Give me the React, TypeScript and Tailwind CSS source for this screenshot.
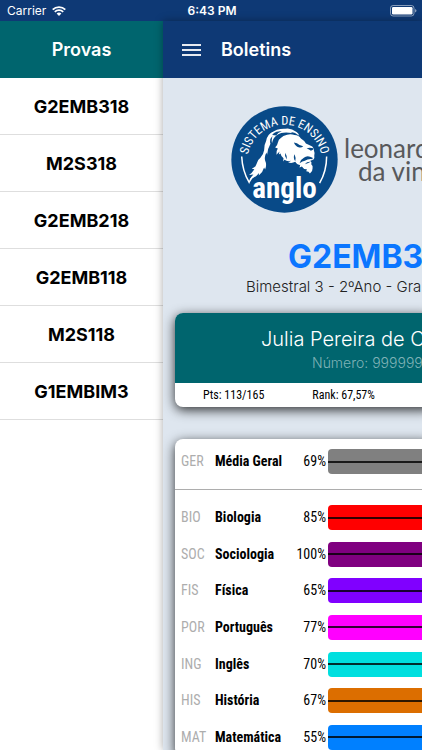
const exams = ["G2EMB318", "M2S318", "G2EMB218", "G2EMB118", "M2S118", "G1EMBIM3"];

const subjects = [
  { code: "BIO", name: "Biologia", score: "85%", color: "bg-[#ff0000]" },
  { code: "SOC", name: "Sociologia", score: "100%", color: "bg-[#800080]" },
  { code: "FIS", name: "Física", score: "65%", color: "bg-[#8000ff]" },
  { code: "POR", name: "Português", score: "77%", color: "bg-[#ff00ff]" },
  { code: "ING", name: "Inglês", score: "70%", color: "bg-[#00dfdf]" },
  { code: "HIS", name: "História", score: "67%", color: "bg-[#dc6e00]" },
  { code: "MAT", name: "Matemática", score: "55%", color: "bg-[#0080ff]" },
];

function WifiIcon() {
  return (
    <svg viewBox="0 0 14 10" className="h-[10px] w-[14px]" fill="none" stroke="white" strokeWidth="1.8">
      <path d="M0.7 3.6 A9 9 0 0 1 13.3 3.6" />
      <path d="M2.8 5.8 A6 6 0 0 1 11.2 5.8" />
      <path d="M4.6 7.6 A3.4 3.4 0 0 1 9.4 7.6 L7 10 Z" fill="white" stroke="none" />
    </svg>
  );
}

function BatteryIcon() {
  return (
    <svg viewBox="0 0 27 12" className="h-3 w-[27px]">
      <rect x="0.5" y="0.5" width="23.5" height="10.5" rx="2.6" fill="none" stroke="white" strokeOpacity="0.5" />
      <rect x="2" y="2" width="20.5" height="7.5" rx="1.2" fill="white" />
      <path d="M25 4 Q26.5 4.6 26.5 5.8 Q26.5 7 25 7.6 Z" fill="white" fillOpacity="0.5" />
    </svg>
  );
}

function AngloLogo() {
  return (
    <svg viewBox="28 32 320 320" className="size-[107px] shrink-0" role="img" aria-label="Sistema de Ensino Anglo">
      <circle cx="188" cy="192" r="159" fill="#084a88" />
      <path id="seal-arc" d="M76 200 A112 112 0 1 1 300 200" fill="none" />
      <text className="font-['Roboto_Condensed',sans-serif]" fontSize="37" fill="white" textAnchor="middle">
        <textPath href="#seal-arc" startOffset="50%">
          SISTEMA DE ENSINO
        </textPath>
      </text>
      <g fill="none" stroke="white" strokeWidth="4.5">
        <path d="M60 183 Q62 226 82 260 Q90 242 108 230" />
        <path d="M314 183 Q314 226 293 263" />
      </g>
      <g fill="white">
        {/* mane */}
        <path d="M154 109 Q136 116 133 137 Q127 148 127 164 Q125 177 116 187 Q107 193 104 206 Q101 216 90 220 L98 221 Q91 232 82 238 L95 237 Q89 246 83 252 Q101 246 112 232 L111 240 Q124 229 127 216 L130 222 Q136 208 130 195 Q127 183 134 171 L136 178 Q138 158 146 145 Q142 132 152 122 Q148 136 151 143 Q153 128 164 120 L151 119 Q158 112 154 109 Z" />
        <path d="M148 113 Q165 99 190 100 Q207 96 224 110 Q230 114 232 121 Q220 111 206 109 L212 113 Q190 109 178 113 Q169 116 162 122 Q167 112 180 107 Q164 107 148 117 Z" />
        {/* head */}
        <path d="M177 128 Q183 120 196 118 Q207 115 218 119 Q231 120 237 129 Q246 134 252 144 Q262 149 271 153 Q276 157 276 165 Q279 171 277 180 Q279 188 274 193 L265 196 Q271 201 268 206 Q275 212 272 218 Q273 226 264 234 Q261 227 253 227 L255 221 Q245 222 240 213 L233 216 L235 208 Q225 209 220 199 Q211 204 199 201 L208 196 Q196 199 188 193 L184 198 L185 188 Q178 184 176 174 L171 177 L173 168 L164 178 Q163 165 168 159 L160 156 Q168 147 168 142 Q170 132 177 128 Z" />
      </g>
      <g fill="#084a88">
        {/* brow, nose and mouth */}
        <path d="M216 141 Q226 141 233 149 L244 152 Q238 158 230 155 Q222 154 216 141 Z" />
        <path d="M254 158 Q264 155 275 158 Q275 163 267 166 Q262 161 254 158 Z" />
        <path d="M272 187 Q256 178 246 187 Q236 192 233 203 Q242 197 249 196 Q258 189 272 191 Z" />
        <path d="M249 206 Q255 198 266 199 Q261 203 249 206 Z" />
        <path d="M218 176 Q213 186 220 197 Q223 186 218 176 Z" />
        <path d="M190 172 Q187 182 195 192 Q196 181 190 172 Z" />
      </g>
      <text
        x="188"
        y="307"
        className="font-['Roboto_Condensed',sans-serif] font-bold"
        fontSize="87"
        fill="white"
        textAnchor="middle"
      >
        anglo
      </text>
    </svg>
  );
}

function Bar({ color }: { color: string }) {
  return (
    <div className={`flex h-[25px] items-center rounded-l ${color}`}>
      <div className="h-[2px] w-full bg-black/80" />
    </div>
  );
}

function StatusBar() {
  return (
    <div className="grid h-[21px] grid-cols-3 items-center bg-[#0e3975] pr-[5px] pl-[7px] text-[12px] text-white">
      <div className="flex items-center gap-[6px]">
        <span>Carrier</span>
        <WifiIcon />
      </div>
      <span className="text-center font-semibold">6:43 PM</span>
      <div className="flex justify-end">
        <BatteryIcon />
      </div>
    </div>
  );
}

function Drawer() {
  return (
    <aside className="w-[163px] shrink-0">
      <h2 className="flex h-[57px] items-center justify-center bg-[#00656e] text-[18px] font-semibold text-white">
        Provas
      </h2>
      <nav>
        {exams.map((exam) => (
          <a
            key={exam}
            href="#"
            className="flex h-[57px] items-center justify-center border-b border-[#dedede] text-[18px] font-bold text-black"
          >
            {exam}
          </a>
        ))}
      </nav>
    </aside>
  );
}

function StudentCard() {
  return (
    <section className="mt-4 -mr-3 ml-3 overflow-hidden rounded-lg bg-white shadow-[0_3px_12px_rgba(0,0,0,0.8)]">
      <div className="h-[70px] bg-[#00656e] pt-3 whitespace-nowrap">
        <p className="pl-[86px] text-[20px] leading-7 font-light text-white">Julia Pereira de C</p>
        <p className="pl-[137px] text-[14px] leading-5 font-light text-[#7fb2b6]">Número: 999999</p>
      </div>
      <div className="flex h-6 items-center gap-12 pl-7 font-['Roboto_Condensed',sans-serif] text-[12px] text-black">
        <span>Pts: 113/165</span>
        <span>Rank: 67,57%</span>
      </div>
    </section>
  );
}

function ScoresCard() {
  return (
    <section className="mt-8 -mr-3 ml-3 rounded-lg bg-white shadow-[0_3px_12px_rgba(0,0,0,0.8)]">
      <table className="w-full table-fixed font-['Roboto_Condensed',sans-serif] text-[14px] text-black">
        <colgroup>
          <col className="w-10" />
          <col className="w-[72px]" />
          <col className="w-[41px]" />
          <col />
        </colgroup>
        <tbody>
          <tr className="h-[50px] border-b border-[#adadad]">
            <td className="pb-1 pl-[6px] text-[#adadad]">GER</td>
            <td className="pb-1 font-bold">Média Geral</td>
            <td className="pr-[2px] pb-1 text-right">69%</td>
            <td className="pb-1">
              <Bar color="bg-[#808080]" />
            </td>
          </tr>
        </tbody>
      </table>
      <table className="mt-[10px] h-64 w-full table-fixed font-['Roboto_Condensed',sans-serif] text-[14px] text-black">
        <colgroup>
          <col className="w-10" />
          <col className="w-[72px]" />
          <col className="w-[41px]" />
          <col />
        </colgroup>
        <tbody>
          {subjects.map((s) => (
            <tr key={s.code}>
              <td className="pl-[6px] text-[#adadad]">{s.code}</td>
              <td className="font-bold">{s.name}</td>
              <td className="pr-[2px] text-right">{s.score}</td>
              <td>
                <Bar color={s.color} />
              </td>
            </tr>
          ))}
        </tbody>
      </table>
    </section>
  );
}

export default function App() {
  return (
    <div className="flex h-screen flex-col overflow-hidden bg-white font-['Inter',sans-serif]">
      <StatusBar />
      <div className="flex min-h-0 flex-1">
        <Drawer />
        <main className="relative min-w-0 flex-1 bg-[#dee6ef] shadow-[0_0_8px_rgba(0,0,0,0.35)]">
          <div className="h-full overflow-hidden">
            <header className="flex h-[57px] items-center gap-5 bg-[#0e3975] pl-[19px]">
              <button type="button" aria-label="Menu" className="flex w-[19px] flex-col gap-[3px]">
                <span className="h-[2px] w-full bg-white/90" />
                <span className="h-[2px] w-full bg-white/90" />
                <span className="h-[2px] w-full bg-white/90" />
              </button>
              <h1 className="text-[18px] font-semibold text-white">Boletins</h1>
            </header>
            <div className="mt-7 flex items-center gap-[6px] pl-[68px]">
              <AngloLogo />
              <p className="font-['Lato',sans-serif] text-[26px] leading-[23px] whitespace-nowrap text-[#58595b]">
                leonard
                <br />
                <span className="pl-[14px]">da vin</span>
              </p>
            </div>
            <h2 className="mt-6 pl-[125px] text-[32px] leading-10 font-bold text-[#0b76ff]">G2EMB318</h2>
            <p className="pl-[83px] text-[15px] leading-5 font-light whitespace-nowrap text-[#222]">
              Bimestral 3 - 2ºAno - Gra
            </p>
            <StudentCard />
            <ScoresCard />
          </div>
        </main>
      </div>
    </div>
  );
}
